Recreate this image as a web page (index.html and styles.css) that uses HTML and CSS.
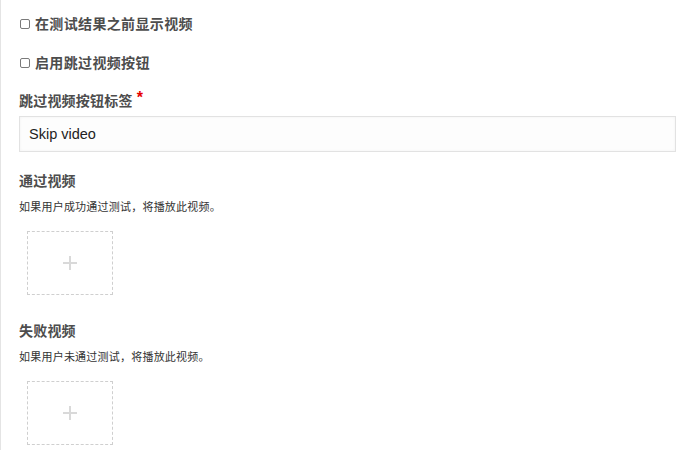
FILE: index.html
```html
<!DOCTYPE html>
<html lang="zh-CN">
<head>
    <meta charset="UTF-8">
    <title>视频设置</title>
    <link rel="stylesheet" href="styles.css">
</head>
<body>
    <div class="panel">
        <label class="check-row">
            <span class="box"></span>
            在测试结果之前显示视频
        </label>
        <label class="check-row">
            <span class="box"></span>
            启用跳过视频按钮
        </label>

        <div class="field">
            <div class="field-label">跳过视频按钮标签 <span class="required">*</span></div>
            <div class="text-input">Skip video</div>
        </div>

        <div class="video-field">
            <div class="field-label">通过视频</div>
            <div class="field-help">如果用户成功通过测试，将播放此视频。</div>
            <div class="upload">
                <svg width="14" height="14" viewBox="0 0 14 14">
                    <path d="M7 0v14M0 7h14" stroke="#d9d9d9" stroke-width="2"/>
                </svg>
            </div>
        </div>

        <div class="video-field">
            <div class="field-label">失败视频</div>
            <div class="field-help">如果用户未通过测试，将播放此视频。</div>
            <div class="upload">
                <svg width="14" height="14" viewBox="0 0 14 14">
                    <path d="M7 0v14M0 7h14" stroke="#d9d9d9" stroke-width="2"/>
                </svg>
            </div>
        </div>
    </div>
</body>
</html>
```

FILE: styles.css
```css
body {
    margin: 0;
    font-family: "Liberation Sans", "Noto Sans CJK SC", sans-serif;
    background: #ffffff;
}
.panel {
    min-height: 450px;
    box-sizing: border-box;
    border-left: 1px solid #e4e4e4;
    padding: 13px 17px 0 18px;
}
.check-row {
    display: flex;
    align-items: center;
    height: 20px;
    margin-bottom: 19px;
    font-size: 14px;
    font-weight: bold;
    letter-spacing: 0.35px;
    color: #4d4d4d;
}
.check-row .box {
    width: 8px;
    height: 8px;
    border: 1px solid #7a7a7a;
    border-radius: 2px;
    margin: 2px 5px 0 1px;
    background: #fff;
}
.field-label {
    height: 20px;
    line-height: 20px;
    font-size: 14px;
    font-weight: bold;
    letter-spacing: 0.2px;
    color: #4d4d4d;
}
.required {
    color: #e60000;
    font-size: 16px;
    position: relative;
    top: -3px;
}
.field .field-label {
    margin-bottom: 5px;
}
.text-input {
    height: 36px;
    box-sizing: border-box;
    border: 1px solid #e2e2e2;
    background: #fdfdfd;
    box-shadow: inset 0 0 3px rgba(0,0,0,0.05);
    padding: 0 9px;
    line-height: 34px;
    font-size: 14.5px;
    color: #222;
}
.video-field {
    margin-top: 19px;
}
.video-field + .video-field {
    margin-top: 26px;
}
.field-help {
    margin-top: 8px;
    height: 16px;
    line-height: 16px;
    font-size: 11px;
    letter-spacing: 0.22px;
    color: #333;
}
.upload {
    margin: 16px 0 0 8px;
    width: 86px;
    height: 64px;
    box-sizing: border-box;
    border: 1px dashed #cfcfcf;
    display: flex;
    align-items: center;
    justify-content: center;
}
```
